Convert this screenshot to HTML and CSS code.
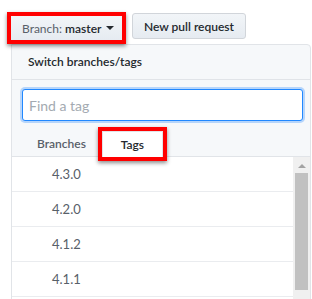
FILE: index.html
```html
<!DOCTYPE html>
<html lang="en">
<head>
    <meta charset="UTF-8">
    <meta name="viewport" content="width=device-width, initial-scale=1.0">
    <title>Branch menu</title>
    <link rel="stylesheet" href="styles.css">
</head>
<body>

    <div class="toolbar">
        <div class="highlight">
            <button class="btn btn-branch">Branch: <span class="branch-name">master</span> <span class="caret"></span></button>
        </div>
        <button class="btn btn-new">New pull request</button>
    </div>

    <div class="menu">
        <div class="menu-header">Switch branches/tags</div>

        <div class="menu-filter">
            <input class="filter-input" type="text" placeholder="Find a tag">
        </div>

        <div class="menu-tabs">
            <span class="tab">Branches</span>
            <div class="highlight highlight-tab">
                <span class="tab tab-selected">Tags</span>
            </div>
        </div>

        <div class="menu-body">
            <ul class="menu-list">
                <li>4.3.0</li>
                <li>4.2.0</li>
                <li>4.1.2</li>
                <li>4.1.1</li>
            </ul>
            <div class="scrollbar">
                <div class="scroll-arrow"></div>
                <div class="scroll-thumb"></div>
            </div>
        </div>
    </div>

</body>
</html>
```

FILE: styles.css
```css
/* General Styles */
body {
    margin: 0;
    padding: 12px 0 0 7px;
    font-family: 'Lato', 'Open Sans', sans-serif;
    font-size: 12px;
    color: #24292e;
    background: #fff;
    height: 299px;
    overflow: hidden;
    box-sizing: border-box;
}

/* Top buttons */
.toolbar {
    display: flex;
    align-items: flex-start;
    gap: 6px;
}

.highlight {
    border: 4px solid #ff0000;
    box-shadow: 0 2px 4px rgba(0, 0, 0, 0.45);
    position: relative;
    z-index: 1;
}

.btn {
    font-family: inherit;
    font-size: 12px;
    font-weight: 600;
    color: #24292e;
    background: linear-gradient(#f2f5f8, #e6ebf1);
    border: 1px solid #d1d5da;
    border-radius: 3px;
    padding: 0 10px;
    cursor: pointer;
}

.btn-branch {
    display: flex;
    align-items: center;
    justify-content: flex-start;
    height: 24px;
    width: 111px;
    border: none;
    border-radius: 0;
    padding: 0 0 0 11px;
    font-weight: 400;
    color: #586069;
    white-space: pre;
}

.branch-name {
    font-weight: 600;
    color: #24292e;
}

.caret {
    display: inline-block;
    margin-left: 5px;
    border-top: 4px solid #24292e;
    border-left: 4px solid transparent;
    border-right: 4px solid transparent;
}

.btn-new {
    height: 26px;
    width: 114px;
    margin-top: 1px;
    padding: 0;
}

/* Dropdown menu */
.menu {
    margin-left: 4px;
    width: 300px;
    border: 1px solid #e1e4e8;
    border-radius: 0 4px 0 0;
    background: #f6f8fa;
    box-sizing: border-box;
}

.menu-header {
    height: 34px;
    line-height: 34px;
    padding-left: 16px;
    font-weight: 600;
    color: #24292e;
    border-bottom: 1px solid #e1e4e8;
}

.menu-filter {
    padding: 9px 7px 6px 10px;
}

.filter-input {
    display: block;
    width: 100%;
    height: 32px;
    box-sizing: border-box;
    border: 1px solid #2188ff;
    border-radius: 3px;
    box-shadow: 0 0 0 2px #b6d5fb;
    padding: 0 6px;
    font-family: inherit;
    font-size: 14px;
    color: #24292e;
    outline: none;
}

.filter-input::placeholder {
    color: #a3aab1;
}

.menu-tabs {
    display: flex;
    align-items: flex-end;
    height: 29px;
    padding-left: 12px;
    border-bottom: 1px solid #e1e4e8;
}

.tab {
    display: block;
    height: 25px;
    line-height: 25px;
    padding: 0 12px 0 13px;
    font-weight: 600;
    color: #586069;
}

.highlight-tab {
    margin-bottom: -5px;
}

.tab-selected {
    height: 26px;
    line-height: 26px;
    width: 61px;
    padding: 0;
    text-align: center;
    color: #24292e;
    background: #fff;
    box-sizing: border-box;
    border: 1px solid #e1e4e8;
    border-bottom: none;
}

/* Tag list */
.menu-body {
    display: flex;
    background: #fff;
    height: 150px;
}

.menu-list {
    list-style-type: none;
    margin: 0;
    padding: 0;
    flex: 1;
}

.menu-list li {
    height: 34px;
    line-height: 34px;
    padding-left: 40px;
    font-size: 13px;
    color: #586069;
    border-bottom: 1px solid #eaecef;
}

.scrollbar {
    width: 17px;
    background: #f0f0f0;
    padding: 0 2px;
    box-sizing: border-box;
}

.scroll-arrow {
    width: 0;
    margin: 7px auto 5px;
    border-bottom: 4px solid #a3a3a3;
    border-left: 4px solid transparent;
    border-right: 4px solid transparent;
}

.scroll-thumb {
    height: 117px;
    background: #c1c1c1;
}
```
